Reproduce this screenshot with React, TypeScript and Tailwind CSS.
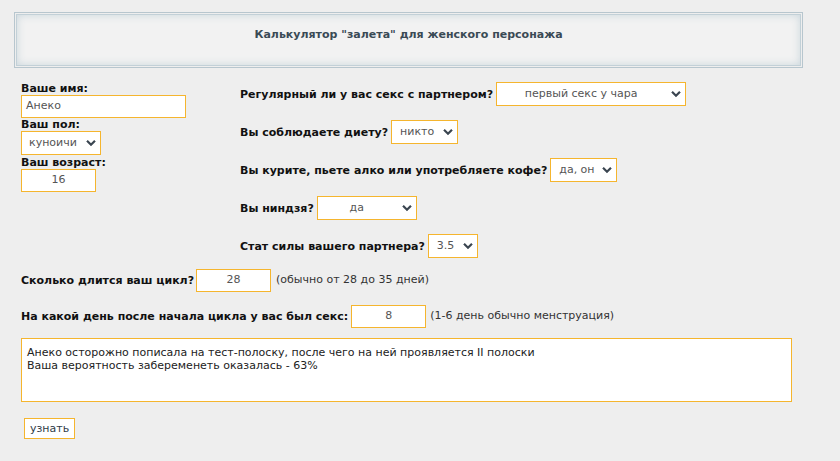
import React from "react";

const font = { fontFamily: '"DejaVu Sans", Verdana, sans-serif' };

function Chevron() {
  return (
    <svg width="10" height="7" viewBox="0 0 10 7" className="absolute right-[4px] top-1/2 -translate-y-1/2">
      <path d="M1 1.2 L5 5.2 L9 1.2" fill="none" stroke="#3b4651" strokeWidth="2.2" />
    </svg>
  );
}

function FakeSelect({
  value,
  className,
  center = false,
}: {
  value: string;
  className: string;
  center?: boolean;
}) {
  return (
    <div
      className={`relative h-[24px] bg-white border border-[#f5b52e] flex items-center text-[11px] text-[#555] ${
        center ? "justify-center pr-[20px]" : "pl-[8px]"
      } ${className}`}
    >
      <span>{value}</span>
      <Chevron />
    </div>
  );
}

function Label({ children }: { children: React.ReactNode }) {
  return <div className="text-[11px] font-bold text-[#111] leading-[13px] whitespace-nowrap">{children}</div>;
}

function Row({ label, children }: { label: string; children: React.ReactNode }) {
  return (
    <div className="flex items-center gap-[3px]">
      <Label>{label}</Label>
      {children}
    </div>
  );
}

export default function App() {
  return (
    <div className="w-[840px] h-[461px] bg-[#eeeeee] overflow-hidden" style={font}>
      <div className="pt-[12px] pl-[14px]">
        <div className="w-[789px] h-[56px] border border-[#b7c6ce] p-px">
          <div className="h-full border border-[#c2d0d7] bg-[#f2f2f2] shadow-[inset_0_0_9px_#c9d6dc] flex items-center justify-center pb-[10px]">
            <span className="text-[11px] font-bold text-[#3a4a55]">
              Калькулятор "залета" для женского персонажа
            </span>
          </div>
        </div>
      </div>

      <div className="flex pl-[21px] pt-[14px]">
        <div className="w-[219px] flex flex-col">
          <Label>Ваше имя:</Label>
          <div className="w-[165px] h-[23px] bg-white border border-[#f5b52e] flex items-center pl-[4px] text-[11px] text-[#555]">
            Анеко
          </div>
          <Label>Ваш пол:</Label>
          <FakeSelect value="куноичи" className="w-[80px] !pl-[7px]" />
          <div className="mt-[1px]">
            <Label>Ваш возраст:</Label>
          </div>
          <div className="w-[75px] h-[23px] bg-white border border-[#f5b52e] flex items-center justify-center text-[11px] text-[#555]">
            16
          </div>
        </div>

        <div className="flex flex-col gap-[14px]">
          <Row label="Регулярный ли у вас секс с партнером?">
            <FakeSelect value="первый секс у чара" className="w-[190px]" center />
          </Row>
          <Row label="Вы соблюдаете диету?">
            <FakeSelect value="никто" className="w-[67px]" />
          </Row>
          <Row label="Вы курите, пьете алко или употребляете кофе?">
            <FakeSelect value="да, он" className="w-[67px]" />
          </Row>
          <Row label="Вы ниндзя?">
            <FakeSelect value="да" className="w-[100px]" center />
          </Row>
          <Row label="Стат силы вашего партнера?">
            <FakeSelect value="3.5" className="w-[50px]" />
          </Row>
        </div>
      </div>

      <div className="pl-[21px] pt-[11px] flex flex-col">
        <div className="flex items-center gap-[2px] text-[11px]">
          <Label>Сколько длится ваш цикл?</Label>
          <div className="w-[75px] h-[23px] bg-white border border-[#f5b52e] flex items-center justify-center text-[#555]">
            28
          </div>
          <span className="ml-[3px] text-[#333]">(обычно от 28 до 35 дней)</span>
        </div>
        <div className="flex items-center gap-[3px] text-[11px] mt-[13px]">
          <Label>На какой день после начала цикла у вас был секс:</Label>
          <div className="w-[75px] h-[23px] bg-white border border-[#f5b52e] flex items-center justify-center text-[#555]">
            8
          </div>
          <span className="ml-[1px] text-[#333]">(1-6 день обычно менструация)</span>
        </div>
        <div className="mt-[10px] w-[771px] h-[64px] bg-white border border-[#f5b52e] px-[5px] pt-[7px] text-[11px] leading-[13px] text-[#222]">
          <div>Анеко осторожно пописала на тест-полоску, после чего на ней проявляется II полоски</div>
          <div>Ваша вероятность забеременеть оказалась - 63%</div>
        </div>
        <div className="mt-[16px] ml-[3px] flex">
          <button
            type="button"
            className="h-[21px] px-[5px] bg-white border border-[#f5b52e] text-[11px] text-[#2f3c47] leading-none"
            style={font}
          >
            узнать
          </button>
        </div>
      </div>
    </div>
  );
}
